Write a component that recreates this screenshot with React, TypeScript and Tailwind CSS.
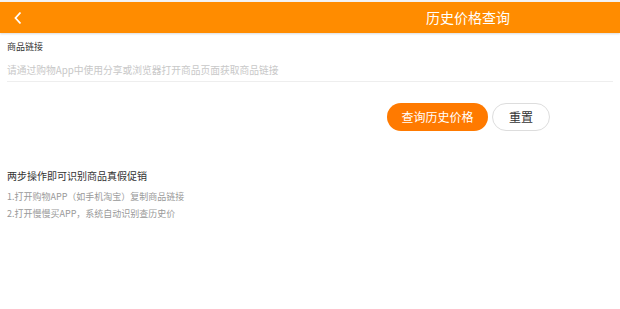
import React from "react";

export default function App() {
  const font = { fontFamily: '"Noto Sans CJK SC", "Noto Sans", sans-serif' };
  return (
    <div className="w-[620px] h-[309px] bg-white overflow-hidden" style={font}>
      <div className="h-[2px] bg-[#f4f4f4]" />
      <div className="h-[31px] bg-[#ff8c00] flex items-center relative shadow-[0_1px_2px_rgba(0,0,0,0.15)]">
        <svg width="10" height="14" viewBox="0 0 10 14" className="ml-[13px]">
          <path d="M7.5 1.5 L2.5 7 L7.5 12.5" stroke="white" strokeWidth="1.8" fill="none" />
        </svg>
        <div className="absolute left-[426px] top-0 h-full flex items-center text-white text-[14px]">历史价格查询</div>
      </div>
      <div className="px-[7px] pt-[8px]">
        <div className="text-[9px] leading-[12px] text-[#333]">商品链接</div>
        <div className="mt-[10px] h-[19px] text-[9.75px] leading-[14px] text-[#c8c8c8] border-b border-[#eeeeee]">
          请通过购物App中使用分享或浏览器打开商品页面获取商品链接
        </div>
      </div>
      <div className="flex justify-end gap-[4px] pr-[70px] mt-[21px]">
        <div className="w-[101px] h-[28px] rounded-full bg-[#ff7a00] text-white text-[12px] flex items-center justify-center">查询历史价格</div>
        <div className="w-[58px] h-[28px] rounded-full border border-[#dddddd] bg-white text-[#333] text-[12px] flex items-center justify-center">重置</div>
      </div>
      <div className="px-[7px] mt-[38px]">
        <div className="text-[10px] leading-[14px] text-[#333]">两步操作即可识别商品真假促销</div>
        <div className="mt-[5px] text-[9px] leading-[17px] text-[#999]">
          <div>1.打开购物APP（如手机淘宝）复制商品链接</div>
          <div>2.打开慢慢买APP，系统自动识别查历史价</div>
        </div>
      </div>
    </div>
  );
}
